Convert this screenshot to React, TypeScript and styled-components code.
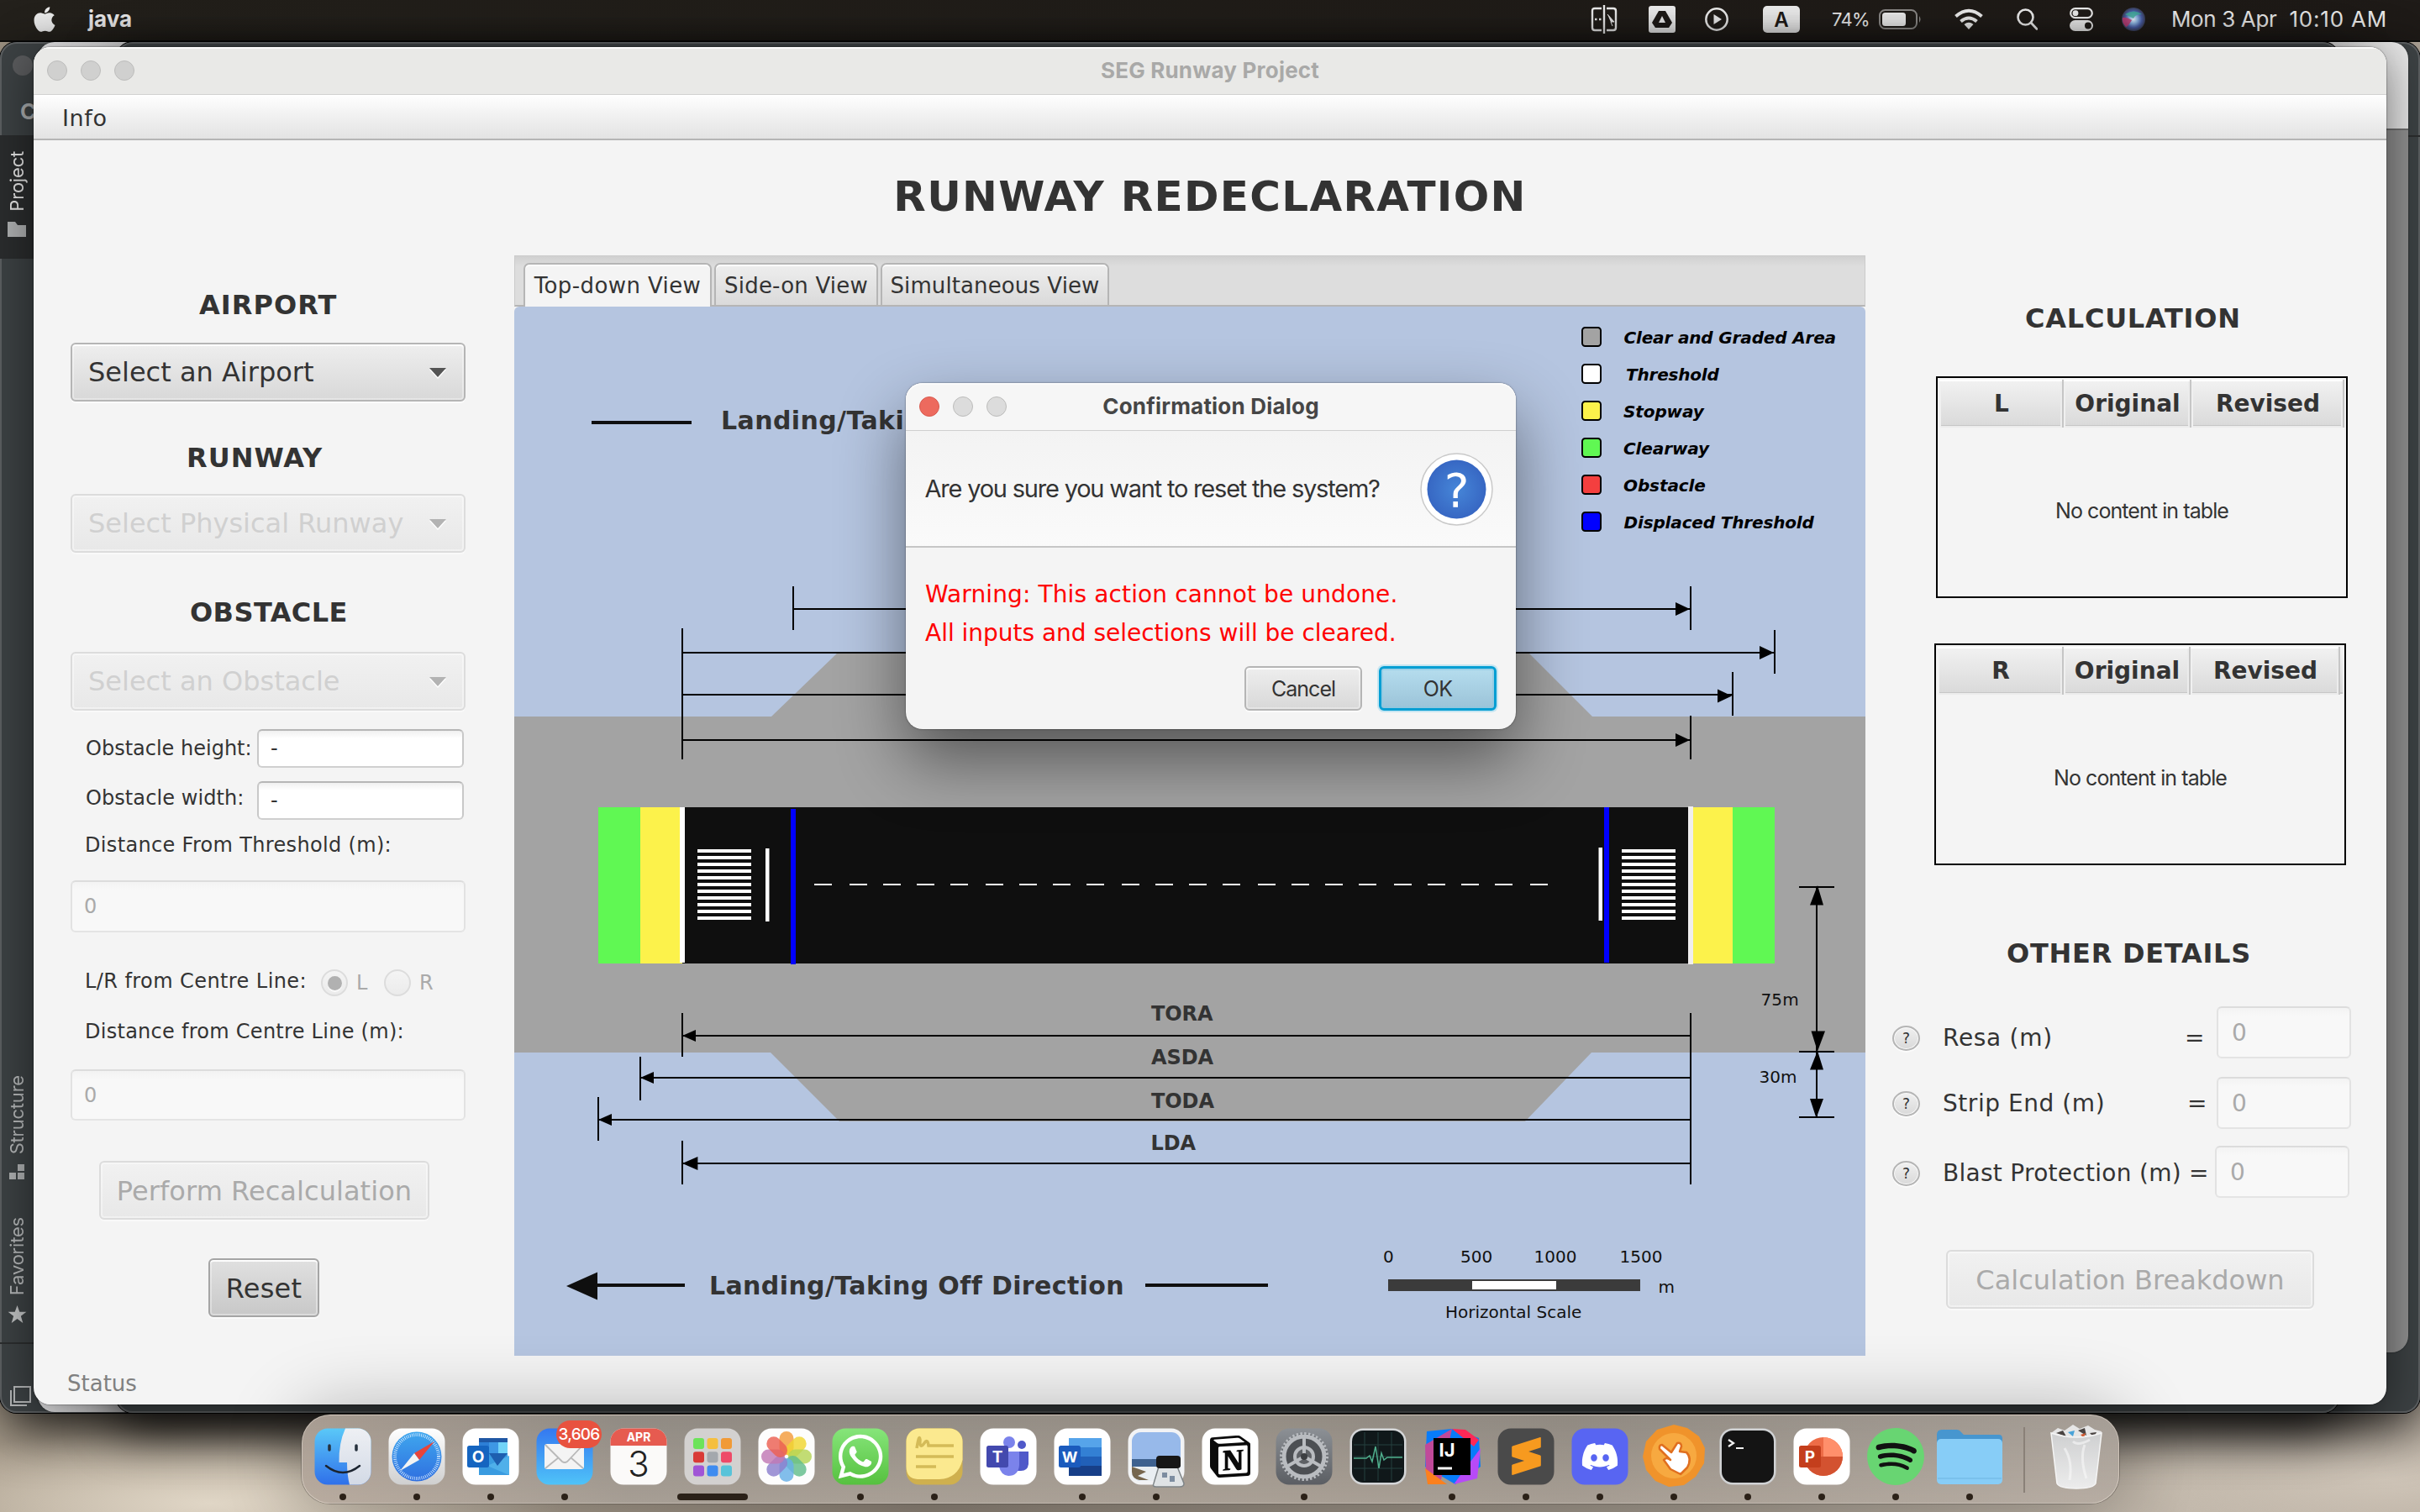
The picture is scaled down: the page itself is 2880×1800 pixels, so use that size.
import React from "react";
import styled, { createGlobalStyle, css } from "styled-components";
import { FaApple, FaWhatsapp, FaDiscord, FaSpotify } from "react-icons/fa";
import { SiNotion, SiSublimetext } from "react-icons/si";

const uiFont = '"DejaVu Sans", Verdana, sans-serif';
const sysFont = 'Inter, "Liberation Sans", sans-serif';
const ink = "#333333";

const GlobalStyle = createGlobalStyle`
  * { box-sizing: border-box; }
  html, body { margin: 0; padding: 0; }
  body { width: 2880px; height: 1800px; overflow: hidden; font-family: ${uiFont}; color: ${ink}; white-space: pre; }
  svg { display: block; }
`;

/* ---------- desktop and background windows ---------- */

const Desktop = styled.div`
  position: relative;
  width: 2880px;
  height: 1800px;
  overflow: hidden;
  background:
    radial-gradient(ellipse 420px 90px at 250px 1790px, #e0d6c6 0%, rgba(224, 214, 198, 0) 100%),
    radial-gradient(ellipse 300px 80px at 2840px 1760px, #cfc5b8 0%, rgba(207, 197, 184, 0) 100%),
    linear-gradient(90deg, #a99d8c 0, #b9ad9c 300px, #8d8377 1100px, #a39a8e 2000px, #c2b8ab 2600px, #b9aea1 2880px);
`;

const MenuBar = styled.header`
  display: flex;
  align-items: center;
  height: 50px;
  padding: 0 39px 2px 40px;
  background: linear-gradient(90deg, #24211c, #1f1b18);
  border-bottom: 2px solid #0e0d0c;
  color: #ececec;
  font: 26px/48px ${sysFont};
`;

const AppName = styled.span`
  font-weight: 700;
  margin-left: 39px;
`;

const StatusItems = styled.div`
  display: flex;
  align-items: center;
  margin-left: auto;
`;

const StatusItem = styled.span<{ $before: number; $track?: number; $size?: number }>`
  display: block;
  margin-left: ${(p) => p.$before}px;
  letter-spacing: ${(p) => p.$track ?? 0}px;
  font-size: ${(p) => p.$size ?? 26}px;
`;

const BackWindow = styled.div<{ $x: number; $right: number; $bottom: number; $tone: "dark" | "light" | "split" }>`
  position: absolute;
  left: ${(p) => p.$x}px;
  top: 50px;
  width: ${(p) => p.$right - p.$x}px;
  height: ${(p) => p.$bottom - 50}px;
  border-radius: 20px;
  overflow: hidden;
  background: ${(p) =>
    p.$tone === "dark" ? "#3c4143" : p.$tone === "light" ? "#e4e4e6" : "linear-gradient(#e6e6e6 0 103px, #6e6e6e 103px 105px, #909090 105px)"};
  box-shadow: ${(p) => (p.$tone === "dark" ? "inset 0 0 0 2px #5b5e60, 0 0 0 1px #000, 0 20px 60px rgba(0,0,0,.75)" : "0 0 2px rgba(0,0,0,.5)")};
`;

const IdeHeader = styled.div`
  display: flex;
  flex-direction: column;
  height: 113px;
  border-bottom: 2px solid #2a2c2d;
  padding: 16px 0 0 24px;
  color: #a9abac;
  font: 700 26px/40px ${sysFont};
`;

const IdeDot = styled.i`
  width: 24px;
  height: 24px;
  flex: none;
  margin: 0 0 23px -9px;
  border-radius: 50%;
  background: #5a5b5d;
`;

const IdeRail = styled.div`
  display: flex;
  flex-direction: column;
  width: 40px;
`;

const RailItem = styled.div<{ $before: number; $active?: boolean; $h: number }>`
  display: flex;
  flex-direction: column;
  align-items: center;
  gap: 12px;
  height: ${(p) => p.$h}px;
  margin-top: ${(p) => p.$before}px;
  padding-top: ${(p) => (p.$active ? 17 : 0)}px;
  background: ${(p) => (p.$active ? "#2a2c2d" : "transparent")};
  color: ${(p) => (p.$active ? "#e4e4e4" : "#b4b6b7")};
  span {
    writing-mode: vertical-rl;
    transform: rotate(180deg);
    font: 22px/30px ${sysFont};
    letter-spacing: -0.2px;
  }
`;

const RailFooter = styled.div`
  height: 84px;
  margin-top: 22px;
  padding: 50px 0 0 12px;
  border-top: 2px solid #2b2d2e;
`;

/* ---------- application window ---------- */

const AppWindow = styled.main`
  position: absolute;
  left: 40px;
  top: 56px;
  width: 2800px;
  height: 1616px;
  display: flex;
  flex-direction: column;
  border-radius: 20px;
  overflow: hidden;
  background: #f4f4f4;
`;

const WindowShadow = styled.div`
  position: absolute;
  left: 40px;
  top: 56px;
  width: 2800px;
  height: 1616px;
  border-radius: 20px;
  box-shadow: 0 0 2px rgba(0, 0, 0, 0.7), 0 10px 56px rgba(0, 0, 0, 0.5);
`;

const TitleBar = styled.div<{ $bg: string; $line: string; $color: string }>`
  display: grid;
  grid-template-columns: 200px 1fr 200px;
  align-items: center;
  height: 57px;
  flex: none;
  background: ${(p) => p.$bg};
  border-bottom: 1px solid ${(p) => p.$line};
  box-shadow: inset 0 2px 0 #fbfbfb;
  color: ${(p) => p.$color};
  font: 700 26px/52px ${sysFont};
  letter-spacing: 0.2px;
  text-align: center;
`;

const Lights = styled.div`
  display: flex;
  gap: 16px;
  padding-left: 16px;
`;

const Light = styled.i<{ $close?: boolean; $fill: string }>`
  width: 24px;
  height: 24px;
  border-radius: 50%;
  background: ${(p) => (p.$close ? "#ed6a5e" : p.$fill)};
  border: 1px solid ${(p) => (p.$close ? "#d95a4f" : "#bcbcbb")};
`;

const AppMenu = styled.nav`
  height: 54px;
  flex: none;
  padding-left: 34px;
  font-size: 27px;
  line-height: 55px;
  letter-spacing: 0.6px;
  background: linear-gradient(#ffffff, #f0f0f0 50%, #e3e3e3);
  border-bottom: 2px solid #b5b5b5;
`;

const PageTitle = styled.h1`
  margin: 0;
  height: 137px;
  flex: none;
  text-align: center;
  font-size: 50px;
  line-height: 135px;
  letter-spacing: 1.3px;
`;

const Columns = styled.div`
  display: grid;
  grid-template-columns: 572px 1608px 620px;
  flex: 1;
`;

const Column = styled.section`
  display: flex;
  flex-direction: column;
  align-items: flex-start;
`;

const Heading = styled.h2<{ $before: number; $indent: number; $track: number }>`
  margin: ${(p) => p.$before}px 0 0 ${(p) => p.$indent}px;
  font-size: 32px;
  line-height: 40px;
  letter-spacing: ${(p) => p.$track}px;
`;

const disabledSurface = css`
  border-color: #dcdcdc;
  background: linear-gradient(#f1f1f1, #e8e8e8);
  box-shadow: inset 0 0 0 2px rgba(255, 255, 255, 0.4), 0 2px 0 #f9f9f9;
`;

const surface = css`
  border: 2px solid #b5b5b5;
  border-radius: 6px;
  background: linear-gradient(#eeeeee, #d8d8d8);
  box-shadow: inset 0 2px 0 #fdfdfd, inset 0 0 0 2px rgba(255, 255, 255, 0.35), 0 2px 0 #fbfbfb;
`;

const Combo = styled.div<{ $before: number; $off?: boolean }>`
  ${surface}
  display: flex;
  align-items: center;
  justify-content: space-between;
  width: 470px;
  height: 70px;
  margin: ${(p) => p.$before}px 0 0 44px;
  padding: 0 21.5px 0 19px;
  font-size: 32px;
  ${(p) => p.$off && disabledSurface}
  color: ${(p) => (p.$off ? "#d0d0d0" : ink)};
`;

const Caret = styled.i<{ $off?: boolean }>`
  border: 10.5px solid transparent;
  border-top: 11px solid ${(p) => (p.$off ? "#b3b3b3" : "#545454")};
  border-bottom: 0;
  filter: drop-shadow(0 2px 0 #fff);
`;

const FormRow = styled.div<{ $before: number; $h: number; $indent: number }>`
  display: flex;
  align-items: center;
  height: ${(p) => p.$h}px;
  margin: ${(p) => p.$before}px 0 0 ${(p) => p.$indent}px;
`;

const FieldLabel = styled.label<{ $w?: number; $track: number; $lift?: number }>`
  width: ${(p) => (p.$w ? p.$w + "px" : "auto")};
  margin-bottom: ${(p) => p.$lift ?? 0}px;
  font-size: 24px;
  line-height: 30px;
  letter-spacing: ${(p) => p.$track}px;
`;

const Field = styled.div<{ $w: number; $h: number; $off?: boolean; $pad: number; $size?: number }>`
  width: ${(p) => p.$w}px;
  height: ${(p) => p.$h}px;
  padding-left: ${(p) => p.$pad}px;
  border: 2px solid;
  border-radius: 6px;
  border-color: ${(p) => (p.$off ? "#dcdcdc #e2e2e2 #e4e4e4" : "#b6b6b6 #c8c8c8 #cfcfcf")};
  background: ${(p) => (p.$off ? "linear-gradient(#f3f3f3, #f8f8f8 10px)" : "linear-gradient(#f0f0f0, #ffffff 9px)")};
  color: ${(p) => (p.$off ? "#aaaaaa" : ink)};
  font-size: ${(p) => p.$size ?? 24}px;
  line-height: ${(p) => p.$h - 3}px;
`;

const FieldSlot = styled.div<{ $before: number }>`
  margin: ${(p) => p.$before}px 0 0 44px;
`;

const Radio = styled.i`
  display: grid;
  place-items: center;
  width: 32px;
  height: 32px;
  border: 2px solid #dcdcdc;
  border-radius: 50%;
  background: linear-gradient(#f4f4f4, #ebebeb);
`;

const RadioDot = styled.i`
  width: 17px;
  height: 17px;
  border-radius: 50%;
  background: #b1b1b1;
  box-shadow: 0 2px 0 #fafafa;
`;

const RadioText = styled.span<{ $w: number }>`
  width: ${(p) => p.$w}px;
  padding-left: 10px;
  color: #aaaaaa;
  font-size: 24px;
`;

const Button = styled.div<{ $before?: number; $indent?: number; $w: number; $h: number; $kind?: "off" | "pressed" | "default"; $track?: number }>`
  ${surface}
  display: grid;
  place-items: center;
  width: ${(p) => p.$w}px;
  height: ${(p) => p.$h}px;
  margin: ${(p) => p.$before ?? 0}px 0 0 ${(p) => p.$indent ?? 0}px;
  font-size: 32px;
  line-height: 40px;
  padding-top: 2px;
  letter-spacing: ${(p) => p.$track ?? 0}px;
  ${(p) => p.$kind === "off" && css`${disabledSurface} color: #aaaaaa;`}
  ${(p) => p.$kind === "pressed" && css`
    border-color: #a5a5a5;
    background: linear-gradient(#e0e0e0, #c8c8c8);
  `}
  ${(p) => p.$kind === "default" && css`
    border: 3px solid #039ed3;
    background: linear-gradient(#b5ddee, #9bc3d8);
    box-shadow: inset 0 0 0 2px rgba(140, 200, 225, 0.6), 0 0 0 2px #c5e5f1;
  `}
`;

const StatusText = styled.div`
  margin: 64px 0 0 40px;
  color: #808080;
  font-size: 26px;
  line-height: 30px;
`;

/* ---------- tabs and runway diagram ---------- */

const TabStrip = styled.div`
  display: flex;
  align-items: flex-end;
  height: 61px;
  flex: none;
  padding-left: 10px;
  background: linear-gradient(#d0d0d0, #dddddd 12px);
  border: 1px solid #cbcbcb;
  border-bottom: 2px solid #b5b5b5;
  width: 1608px;
`;

const Tab = styled.div<{ $w: number; $after?: number; $on?: boolean; $track: number }>`
  width: ${(p) => p.$w}px;
  height: ${(p) => (p.$on ? 52 : 50)}px;
  margin: 0 ${(p) => p.$after ?? 0}px ${(p) => (p.$on ? -2 : 0)}px 0;
  border: 2px solid #b5b5b5;
  border-bottom: 0;
  border-radius: 7px 7px 0 0;
  background: ${(p) => (p.$on ? "#f4f4f4" : "linear-gradient(#eeeeee, #dadada)")};
  box-shadow: inset 0 2px 0 #fdfdfd;
  text-align: center;
  font-size: 26px;
  line-height: 51px;
  letter-spacing: ${(p) => p.$track}px;
`;

const Diagram = styled.svg`
  width: 1608px;
  height: 1249px;
  flex: none;
  border-radius: 6px 6px 0 0;
  background: #b5c5e0;
`;

const DiagramText = styled.text<{ $size: number; $bold?: boolean; $italic?: boolean; $track?: number; $color?: string }>`
  font-family: ${uiFont};
  font-size: ${(p) => p.$size}px;
  font-weight: ${(p) => (p.$bold ? 700 : 400)};
  font-style: ${(p) => (p.$italic ? "italic" : "normal")};
  letter-spacing: ${(p) => p.$track ?? 0}px;
  fill: ${(p) => p.$color ?? "#111111"};
`;

const legend: [string, string, number, number][] = [
  ["Clear and Graded Area", "#a3a3a3", 1932.5, -0.16],
  ["Threshold", "#ffffff", 1935, -0.2],
  ["Stopway", "#fcf24b", 1932, -0.1],
  ["Clearway", "#60f853", 1932, -0.1],
  ["Obstacle", "#f43f3f", 1932, -0.1],
  ["Displaced Threshold", "#0000ff", 1932.5, -0.15],
];

const dashes = [969, 1011, 1051, 1091, 1131, 1173, 1213, 1253, 1293, 1335, 1375, 1415, 1455, 1497, 1537, 1577, 1617, 1659, 1699, 1739, 1779, 1821];
const stripes = Array.from({ length: 11 }, (_, i) => 1011 + i * 8);
const upper = [
  { from: 944, to: 2012, y: 725, top: 698, head: 725 },
  { from: 812, to: 2112, y: 777, top: 750, head: 777 },
  { from: 812, to: 2062, y: 827, top: 800, head: 828.5 },
  { from: 812, to: 2012, y: 881, top: 852, head: 881 },
];
const lower = [
  { name: "TORA", x: 1370, base: 1215, tick: 812, y: 1233, top: 1206, s: 1 },
  { name: "ASDA", x: 1370, base: 1267, tick: 762, y: 1283, top: 1258, s: 1 },
  { name: "TODA", x: 1370, base: 1319, tick: 712, y: 1333, top: 1306, s: 1 },
  { name: "LDA", x: 1369.5, base: 1369, tick: 812, y: 1385, top: 1358, s: 1.15 },
];

const RunwayDiagram = () => (
  <Diagram viewBox="612 365 1608 1249">
    <path d="M612 853H918L998 776H1818L1895 853H2220V1253H1894L1815 1335H999L917 1253H612Z" fill="#a3a3a3" />
    <path d="M704 503H823" stroke="#0f0f0f" strokeWidth="4" />
    <DiagramText x="858" y="511" $size={30} $bold $track={0.4} $color={ink}>Landing/Taking Off Direction</DiagramText>
    {legend.map(([name, fill, x, track], i) => (
      <g key={name}>
        <rect x="1883" y={390 + i * 44} width="22" height="22" rx="3.5" fill={fill} stroke="#000" strokeWidth="2" />
        <DiagramText x={x} y={409 + i * 44} $size={20} $bold $italic $track={track} $color="#000">{name}</DiagramText>
      </g>
    ))}
    <g stroke="#000" strokeWidth="2">
      <path d="M944 698V750M812 748V904" />
      {upper.map((a) => (
        <g key={a.y}>
          <path d={`M${a.from} ${a.y}H${a.to}M${a.to} ${a.top}v52`} />
          <path d={`M${a.to - 18} ${a.head - 8}l17 8l-17 8z`} stroke="none" />
        </g>
      ))}
      <path d="M2012 1206V1410" />
      {lower.map((a) => (
        <g key={a.y}>
          <path d={`M${a.tick} ${a.y}H2012M${a.tick} ${a.top}v52`} />
          <path d={`M${a.tick} ${a.y}l${16 * a.s} ${-7 * a.s}v${14 * a.s}z`} stroke="none" />
        </g>
      ))}
    </g>
    {lower.map((a) => (
      <DiagramText key={a.name} x={a.x} y={a.base} $size={24} $bold $track={-0.1} $color={ink}>{a.name}</DiagramText>
    ))}
    <rect x="712" y="961" width="1400" height="186" fill="#0f0f0f" />
    <rect x="712" y="961" width="50" height="186" fill="#60f853" />
    <rect x="762" y="961" width="50" height="186" fill="#fcf24b" />
    <rect x="809" y="961" width="6" height="185" fill="#fff" />
    <rect x="2015" y="961" width="47" height="186" fill="#fcf24b" />
    <rect x="2062" y="961" width="50" height="186" fill="#60f853" />
    <rect x="2009" y="960" width="6" height="188" fill="#f0eeee" />
    <rect x="941" y="963" width="6" height="185" fill="#00f" />
    <rect x="1909" y="961" width="6" height="185" fill="#00f" />
    <g fill="#fff">
      {stripes.map((y) => (
        <path key={y} d={`M830 ${y}h64v4h-64zM1930 ${y}h64v4h-64z`} />
      ))}
      <rect x="911" y="1010" width="4.5" height="87" />
      <rect x="1902.5" y="1009" width="4.5" height="87" />
      {dashes.map((x) => (
        <rect key={x} x={x} y="1052" width="21" height="2" />
      ))}
    </g>
    <g stroke="#000" strokeWidth="2">
      <path d="M2141 1056H2183M2141 1252H2183M2141 1330H2183M2162 1056V1330" />
      <path d="M2163 1054l7 23.5h-16zM2155.500 1227.500h16.500l-9 24zM2163 1251l7 22.500h-16zM2154 1308h16l-8.500 23z" stroke="none" />
    </g>
    <DiagramText x="2095.5" y="1197" $size={20} $track={0.1}>75m</DiagramText>
    <DiagramText x="2093.5" y="1289" $size={20}>30m</DiagramText>
    <path d="M674 1531L711 1514.500V1547.500ZM711 1528H815V1532H711ZM1363 1528H1509V1532H1363Z" fill="#0f0f0f" />
    <DiagramText x="844" y="1541" $size={30} $bold $track={0.38} $color={ink}>Landing/Taking Off Direction</DiagramText>
    <DiagramText x="1646" y="1503" $size={20}>0</DiagramText>
    <DiagramText x="1738" y="1503" $size={20}>500</DiagramText>
    <DiagramText x="1825.5" y="1503" $size={20}>1000</DiagramText>
    <DiagramText x="1927.5" y="1503" $size={20}>1500</DiagramText>
    <rect x="1652" y="1523" width="300" height="14" fill="#3b3b3b" />
    <rect x="1752" y="1525" width="100" height="10" fill="#fff" />
    <DiagramText x="1973.5" y="1539" $size={20}>m</DiagramText>
    <DiagramText x="1720" y="1569" $size={20}>Horizontal Scale</DiagramText>
  </Diagram>
);

/* ---------- result tables and details ---------- */

const Table = styled.div<{ $before: number; $indent: number }>`
  display: flex;
  flex-direction: column;
  width: 490px;
  height: 264px;
  margin: ${(p) => p.$before}px 0 0 ${(p) => p.$indent}px;
  padding: 2px;
  border: 2px solid #000;
`;

const HeaderRow = styled.div<{ $cols: string }>`
  display: grid;
  grid-template-columns: ${(p) => p.$cols};
  height: 56px;
  flex: none;
  border-bottom: 2px solid #c6c6c6;
  background: linear-gradient(#f2f2f2, #dadada);
`;

const HeaderCell = styled.div`
  padding-left: 2px;
  border-right: 2px solid #c6c6c6;
  box-shadow: inset 0 2px 0 #fff, inset 2px 0 0 #f0f0f0, inset -2px -2px 0 #ececec;
  text-align: center;
  font-size: 28px;
  font-weight: 700;
  line-height: 57px;
`;

const EmptyTable = styled.div`
  display: grid;
  place-items: center;
  flex: 1;
  font: 25px/30px ${sysFont};
  letter-spacing: -0.92px;
`;

const ResultTable = ({ side, cols, before, indent }: { side: string; cols: string; before: number; indent: number }) => (
  <Table $before={before} $indent={indent}>
    <HeaderRow $cols={cols}>
      <HeaderCell>{side}</HeaderCell>
      <HeaderCell>Original</HeaderCell>
      <HeaderCell>Revised</HeaderCell>
    </HeaderRow>
    <EmptyTable>No content in table</EmptyTable>
  </Table>
);

const DetailCaption = styled.div<{ $drop: number; $w: number }>`
  display: flex;
  align-items: center;
  width: ${(p) => p.$w}px;
  padding-top: ${(p) => p.$drop}px;
  font-size: 28px;
  line-height: 34px;
`;

const HelpBadge = styled.i`
  width: 33px;
  height: 30px;
  margin-right: 27px;
  border: 2px solid #b5b5b5;
  border-radius: 50%;
  background: linear-gradient(#f0f0f0, #d9d9d9);
  box-shadow: inset 0 0 0 1px #fafafa, 0 2px 0 #fbfbfb;
  font: normal 17px/27px ${uiFont};
  text-align: center;
`;

const DetailName = styled.span<{ $w: number; $track: number }>`
  width: ${(p) => p.$w}px;
  letter-spacing: ${(p) => p.$track}px;
`;

const details = [
  { name: "Resa (m)", before: 43, drop: 13, w: 288, track: 0.7, cap: 386 },
  { name: "Strip End (m)", before: 22, drop: 2, w: 291, track: 0.55, cap: 386 },
  { name: "Blast Protection (m)", before: 20, drop: 4, w: 293, track: 0.28, cap: 384 },
];

/* ---------- confirmation dialog ---------- */

const Dialog = styled.div`
  position: absolute;
  left: 1078px;
  top: 456px;
  width: 726px;
  height: 412px;
  border-radius: 20px;
  background: #f4f4f4;
  box-shadow: 0 0 2px rgba(0, 0, 0, 0.6), 0 36px 80px rgba(0, 0, 0, 0.48);
  ${TitleBar} { border-radius: 20px 20px 0 0; }
`;

const DialogHeader = styled.div`
  display: flex;
  align-items: center;
  justify-content: space-between;
  height: 139px;
  padding: 1px 27.5px 0 22.5px;
  background: linear-gradient(#f3f3f3, #fafafa);
  border-bottom: 2px solid #c6c6c6;
  font: 29px/36px ${sysFont};
  letter-spacing: -1.21px;
`;

const DialogBody = styled.div`
  padding: 33px 23px 0 23px;
  color: #ff0000;
  font-size: 28px;
  line-height: 46px;
`;

const WarningLine = styled.div<{ $track: number }>`
  letter-spacing: ${(p) => p.$track}px;
`;

const DialogButtons = styled.div`
  display: flex;
  justify-content: flex-end;
  gap: 20px;
  margin-top: 16px;
  color: ${ink};
  ${Button} { font: 25px/30px ${sysFont}; padding-top: 0; }
`;

/* ---------- dock ---------- */

const Dock = styled.footer`
  position: absolute;
  left: 359px;
  top: 1684px;
  width: 2163px;
  height: 106px;
  display: flex;
  align-items: flex-start;
  padding: 15px 0 0 4px;
  border-radius: 34px;
  border: 1px solid rgba(225, 215, 205, 0.6);
  background: linear-gradient(rgba(145, 138, 130, 0.35), rgba(190, 178, 166, 0.5)), linear-gradient(90deg, #b3a599, #8f8a83 18%, #979087 45%, #8f8981 70%, #b0a8a0);
  box-shadow: 0 0 0 1px rgba(60, 55, 50, 0.35), 0 0 90px rgba(0, 0, 0, 0.32);
`;

const DockSlot = styled.div`
  display: flex;
  flex-direction: column;
  align-items: center;
  gap: 10px;
  width: 88px;
  svg { overflow: visible; }
`;

const RunningDot = styled.i<{ $wide?: boolean }>`
  width: ${(p) => (p.$wide ? 84 : 8)}px;
  height: 8px;
  border-radius: 4px;
  background: #2b2118;
`;

const DockDivider = styled.i`
  width: 2px;
  height: 78px;
  margin: -1px 17px 0 20px;
  background: #8a8178;
`;

const IconText = styled.text<{ $size: number; $weight?: number }>`
  font-family: ${sysFont};
  font-size: ${(p) => p.$size}px;
  font-weight: ${(p) => p.$weight ?? 700};
  text-anchor: middle;
`;

const Tile = ({ fill }: { fill: string }) => <rect x="0.500" y="0.500" width="67" height="67" rx="15.500" fill={fill} />;

const Finder = () => (
  <>
    <Tile fill="url(#finderBlue)" />
    <path d="M37 .5H52A15.500 15.500 0 0 1 67.500 16V52A15.500 15.500 0 0 1 52 67.500H42Q39 56 39 41H29.500Q29 18 37 .5Z" fill="url(#finderWhite)" />
    <path d="M14 45Q34 61 54 45" fill="none" stroke="#1b2430" strokeWidth="2.500" strokeLinecap="round" />
    <path d="M18 21V26M50 21V26" stroke="#26313d" strokeWidth="3.500" strokeLinecap="round" />
  </>
);

const Safari = () => (
  <>
    <Tile fill="url(#silver)" />
    <circle cx="34" cy="34" r="29.500" fill="url(#safariBlue)" />
    <circle cx="34" cy="34" r="26" fill="none" stroke="#d8ecff" strokeWidth="4" strokeDasharray="0.800 1.470" />
    <path d="M55 16L31 30L37 38Z" fill="#e8443a" />
    <path d="M14 51L31 30L37 38Z" fill="#f3f3f3" />
  </>
);

const Outlook = () => (
  <>
    <Tile fill="#fff" />
    <path d="M20 12H54V20H20Z" fill="#1f57a4" />
    <path d="M20 17H32V34H20Z" fill="#2d7fd6" /><path d="M32 17H43V30H32Z" fill="#3e97e4" /><path d="M43 17H54V30H43Z" fill="#72d4f8" />
    <path d="M20 30H54L56 56H20Z" fill="#3a9be0" /><path d="M56 33V56L30 45Z" fill="#4fb0ea" /><path d="M32 30H54L42 45Z" fill="#1e5fb0" />
    <rect x="6" y="21" width="26" height="26" rx="2.500" fill="#1565c0" />
    <IconText x="19" y="41" $size={19} fill="#fff">O</IconText>
  </>
);

const Mail = () => (
  <>
    <Tile fill="url(#mailBlue)" />
    <rect x="10" y="19" width="47" height="30" rx="3" fill="#f4f4f4" />
    <path d="M11 20L31 40Q34 42 37 40L56 20M11 48L27 35M56 48L41 35" fill="none" stroke="#b9b9b9" strokeWidth="1.800" />
    <rect x="24" y="-9" width="54" height="33" rx="16.500" fill="#e8523f" />
    <IconText x="51" y="14" $size={19} $weight={500} fill="#fff" letterSpacing="-0.8">3,606</IconText>
  </>
);

const Calendar = () => (
  <>
    <Tile fill="#fbfaf9" />
    <path d="M.5 21V16A15.500 15.500 0 0 1 16 .5H52A15.500 15.500 0 0 1 67.500 16V21Z" fill="#e65b50" />
    <IconText x="34" y="16" $size={14} fill="#fff">APR</IconText>
    <IconText x="34" y="57.500" $size={42} $weight={300} fill="#222">3</IconText>
  </>
);

const launchColors = ["#6ce35a", "#f5bf3f", "#f19a36", "#d93a36", "#a4a8ad", "#ee4a68", "#a055d6", "#3f8cf0", "#58c3d9"];
const Launchpad = () => (
  <>
    <Tile fill="#d3d1d0" />
    {launchColors.map((c, i) => (
      <rect key={c} x={11 + (i % 3) * 16.500} y={12 + Math.floor(i / 3) * 16.300} width="13" height="13" rx="3" fill={c} />
    ))}
  </>
);

const petals = ["#f39b3b", "#f0d531", "#b4d456", "#62bd8b", "#66b0e6", "#8b7fcd", "#c179b4", "#ec5f52"];
const Photos = () => (
  <>
    <Tile fill="#fdfdfd" />
    {petals.map((c, i) => (
      <rect key={c} x="25.500" y="4" width="17" height="28" rx="8.500" fill={c} opacity="0.82" transform={`rotate(${i * 45} 34 34)`} />
    ))}
  </>
);

const Notes = () => (
  <>
    <Tile fill="#cfb04e" />
    <path d="M.5 16A15.500 15.500 0 0 1 16 .5H52A15.500 15.500 0 0 1 67.500 16V38Q62 60 40 61H14Q.5 60 .5 46Z" fill="#fbe98f" />
    <path d="M13 24Q16 6 17 14Q16 26 22 18Q26 12 27 21H57M12 34H57M12 46H36" fill="none" stroke="#d4bb58" strokeWidth="3.500" />
  </>
);

const Teams = () => (
  <>
    <Tile fill="#fff" />
    <circle cx="35" cy="17" r="7" fill="#7b83eb" /><circle cx="50" cy="20" r="5" fill="#5059c9" />
    <path d="M40 28H58V43Q57 51 49 51H40Z" fill="#5059c9" /><path d="M23 28H47V44Q46 57 34 57Q25 56 23 46Z" fill="#7b83eb" />
    <rect x="8" y="21" width="26" height="26" rx="2.500" fill="#4349ae" />
    <IconText x="21" y="41" $size={19} fill="#fff">T</IconText>
  </>
);

const Word = () => (
  <>
    <Tile fill="#fff" />
    <path d="M18 12H57V24H18Z" fill="#56a4ea" /><path d="M18 23H57V34H18Z" fill="#3380d4" /><path d="M18 34H57V45H18Z" fill="#2160b8" /><path d="M18 45H57V57H18Z" fill="#173f88" />
    <rect x="6" y="21" width="26" height="26" rx="2.500" fill="#1b5bbd" />
    <IconText x="19" y="41" $size={18} fill="#fff">W</IconText>
  </>
);

const Preview = () => (
  <>
    <Tile fill="#f2f3f5" />
    <rect x="5" y="5" width="58" height="58" rx="11" fill="#97b9ea" />
    <path d="M5 37H63V48H5Z" fill="#3e618f" /><path d="M5 46H63V52Q63 63 52 63H16Q5 63 5 52Z" fill="#e9eef2" />
    <path d="M5 46L22 52L12 57L25 62H14Q5 60 5 52Z" fill="#76664e" />
    <path d="M37 46H59L67 66Q67 70 62 70H34Q29 70 31 66Z" fill="#dfe3e5" stroke="#7f8588" strokeWidth="1.500" />
    <rect x="34" y="33" width="29" height="15" rx="4" fill="#161616" />
    <path d="M41 53h6v6h-6zM50 57h6v7h-6z" fill="#7d8da0" />
  </>
);

const Notion = () => (<><Tile fill="#fff" /><SiNotion x="9" y="9" size={50} color="#0b0b0b" /></>);

const Settings = () => (
  <>
    <Tile fill="url(#slate)" />
    <circle cx="34" cy="34" r="27" fill="#4c4f53" />
    <circle cx="34" cy="34" r="24" fill="none" stroke="#b9bcc0" strokeWidth="5" />
    <circle cx="34" cy="34" r="27.500" fill="none" stroke="#b9bcc0" strokeWidth="3" strokeDasharray="2.400 2.400" />
    <circle cx="34" cy="34" r="11" fill="#5e6165" stroke="#b9bcc0" strokeWidth="4" />
    <path d="M34 34V12M34 34L53 45M34 34L15 45" stroke="#b9bcc0" strokeWidth="4" />
    <circle cx="34" cy="34" r="4" fill="#3c3e41" />
  </>
);

const Activity = () => (
  <>
    <Tile fill="#d4d6d8" />
    <rect x="3" y="3" width="62" height="62" rx="13" fill="#10181a" />
    <path d="M5 20H63M5 34H63M5 48H63M18 5V63M34 5V63M50 5V63" stroke="#24403f" strokeWidth="1" />
    <path d="M5 36H20L24 33L27 40L31 22L35 48L38 30L41 38L45 35H63" fill="none" stroke="#4fae8c" strokeWidth="1.500" />
  </>
);

const IntelliJ = () => (
  <>
    <path d="M4 4L34 1L66 12L68 46L38 67L2 46Z" fill="#087cfa" /><path d="M2 20L34 1L20 66L3 54Z" fill="#c0499a" /><path d="M34 1L50 2L66 14L60 22Z" fill="#fe2857" /><path d="M36 67L68 24L64 60Z" fill="#b74af7" />
    <path d="M2 48L28 67H5Z" fill="#fc801d" />
    <rect x="12" y="12" width="44" height="44" fill="#000" />
    <IconText x="28" y="34" $size={22} fill="#fff">IJ</IconText>
    <path d="M17 48H34" stroke="#fff" strokeWidth="3" />
  </>
);

const Sublime = () => (<><Tile fill="#4a4a4a" /><SiSublimetext x="12" y="11" size={45} color="#f79a1f" /></>);
const Discord = () => (<><Tile fill="#5865f2" /><FaDiscord x="11" y="11" size={46} color="#fff" /></>);

const Pointer = () => (
  <>
    <path d="M34 -4L50 0L64 10L71 24L70 42L60 58L46 68L28 70L12 63L1 50L-3 34L1 16L14 2Z" fill="#f0932b" strokeLinejoin="round" />
    <circle cx="34" cy="33" r="27" fill="#f7a940" />
    <path d="M20 20L31 29L38 18Q43 17 43 22L41 28L49 29Q56 36 50 47L42 55L30 49L22 38Q25 34 30 38L17 25Q16 20 20 20Z" fill="#fff" stroke="#e06f1f" strokeWidth="2.500" strokeLinejoin="round" />
  </>
);

const Terminal = () => (
  <>
    <Tile fill="#d0d2d4" />
    <rect x="3" y="3" width="62" height="62" rx="13" fill="#141414" />
    <path d="M11 14L17 18L11 22M20 24H29" fill="none" stroke="#f2f2f2" strokeWidth="2.200" />
  </>
);

const PowerPoint = () => (
  <>
    <Tile fill="#fff" />
    <circle cx="36" cy="34" r="23" fill="#ed6c47" /><path d="M36 11A23 23 0 0 1 59 34H36Z" fill="#ff8f6b" /><path d="M13 34H59A23 23 0 0 1 13 34Z" fill="#d35230" />
    <rect x="7" y="21" width="26" height="26" rx="2.500" fill="#c43e1c" />
    <IconText x="20" y="41" $size={19} fill="#fff">P</IconText>
  </>
);

const WhatsApp = () => (<><Tile fill="url(#waGreen)" /><FaWhatsapp x="4" y="4" size={60} color="#fff" /></>);
const Spotify = () => (<><circle cx="34" cy="34" r="30" fill="#111" /><FaSpotify x="-1" y="-1" size={70} color="#68d572" /></>);

const Folder = () => (
  <>
    <path d="M-5 8Q-5 2 1 2H19Q22 2 24 5L27 8H69Q73 8 73 13V30H-5Z" fill="#4796cf" />
    <rect x="-5" y="13" width="78" height="54" rx="5" fill="#87cdf7" />
    <path d="M-4 60H72" stroke="#76bde9" strokeWidth="1.500" />
  </>
);

const Trash = () => (
  <>
    <path d="M4 6L12 0L20 3L30 -4L38 1L48 -3L56 2L64 4L62 14H6Z" fill="#e6e6e6" />
    <path d="M10 6L18 3L22 10ZM36 3L44 0L46 9ZM50 6L58 5L55 11Z" fill="#4a4442" />
    <path d="M24 5L32 3L30 10Z" fill="#4aa3d8" /><path d="M39 8L45 6L43 12Z" fill="#d05a30" />
    <path d="M4 6Q34 16 64 6L57 66Q54 72 34 72Q14 72 11 66Z" fill="url(#trashFill)" stroke="#f5f5f5" strokeWidth="1.500" />
    <path d="M20 24Q30 40 26 62M44 20Q38 36 46 60M30 16Q36 22 50 14" fill="none" stroke="#f8f8f8" strokeWidth="3" opacity="0.6" />
  </>
);

type DockApp = { name: string; Icon: () => React.JSX.Element; run?: boolean | "wide" };
const dockApps: DockApp[] = [
  { name: "finder", Icon: Finder, run: true },
  { name: "safari", Icon: Safari, run: true },
  { name: "outlook", Icon: Outlook, run: true },
  { name: "mail", Icon: Mail, run: true },
  { name: "calendar", Icon: Calendar },
  { name: "launchpad", Icon: Launchpad, run: "wide" },
  { name: "photos", Icon: Photos },
  { name: "whatsapp", Icon: WhatsApp, run: true },
  { name: "notes", Icon: Notes, run: true },
  { name: "teams", Icon: Teams },
  { name: "word", Icon: Word, run: true },
  { name: "preview", Icon: Preview, run: true },
  { name: "notion", Icon: Notion },
  { name: "settings", Icon: Settings, run: true },
  { name: "activity", Icon: Activity },
  { name: "intellij", Icon: IntelliJ, run: true },
  { name: "sublime", Icon: Sublime, run: true },
  { name: "discord", Icon: Discord, run: true },
  { name: "pointer", Icon: Pointer, run: true },
  { name: "terminal", Icon: Terminal, run: true },
  { name: "powerpoint", Icon: PowerPoint, run: true },
  { name: "spotify", Icon: Spotify, run: true },
  { name: "folder", Icon: Folder, run: true },
];

const Gradient = ({ id, a, b }: { id: string; a: string; b: string }) => (
  <linearGradient id={id} x1="0" y1="0" x2="0" y2="1">
    <stop offset="0" stopColor={a} />
    <stop offset="1" stopColor={b} />
  </linearGradient>
);

const HiddenSvg = styled.svg`
  position: absolute;
  width: 0;
  height: 0;
`;

const SharedDefs = () => (
  <HiddenSvg>
    <defs>
      <Gradient id="finderBlue" a="#5ac8f8" b="#2f70ea" />
      <Gradient id="finderWhite" a="#eef0f4" b="#d3dae6" />
      <Gradient id="silver" a="#ffffff" b="#cfcfcf" />
      <Gradient id="safariBlue" a="#3fa7ee" b="#2f6fe0" />
      <Gradient id="mailBlue" a="#3478f0" b="#4fc3f8" />
      <Gradient id="waGreen" a="#86e57a" b="#56c13f" />
      <Gradient id="slate" a="#8c9095" b="#5b5e63" />
      <Gradient id="trashFill" a="#cfd0d1" b="#ececec" />
      <radialGradient id="question">
        <stop offset="0" stopColor="#4686d8" />
        <stop offset="1" stopColor="#3767c3" />
      </radialGradient>
      <radialGradient id="siri">
        <stop offset="0" stopColor="#eef6ff" />
        <stop offset="0.350" stopColor="#8fb8e6" />
        <stop offset="0.700" stopColor="#4a5fa8" />
        <stop offset="1" stopColor="#3a3f58" />
      </radialGradient>
    </defs>
  </HiddenSvg>
);

const AppleMark = styled(FaApple)`
  margin: 0 -4px;
`;

const SystemBar = () => (
  <MenuBar>
    <AppleMark size={34} />
    <AppName>java</AppName>
    <StatusItems>
      <svg width="32" height="36" viewBox="0 0 32 36" fill="none" stroke="#ececec" strokeWidth="2.400">
        <path d="M13 5H5Q2 5 2 8V28Q2 31 5 31H13M19 5H27Q30 5 30 8V28Q30 31 27 31H19M16 1V35" />
        <path d="M5 18h2.500M10 18h2.500" /><path d="M20 12L28 21L24 21L26 26" fill="#ececec" strokeWidth="1" />
      </svg>
      <StatusItem $before={37}>
        <svg width="32" height="32" viewBox="0 0 32 32">
          <rect width="32" height="32" rx="3" fill="#ececec" />
          <path d="M12 6H20L28 20L24 26H8L4 20Z" fill="#1f1b18" /><path d="M16 12L20 20H12Z" fill="#ececec" />
        </svg>
      </StatusItem>
      <StatusItem $before={34.5}>
        <svg width="28" height="28" viewBox="0 0 28 28">
          <circle cx="14" cy="14" r="12.700" fill="none" stroke="#ececec" strokeWidth="2.500" /><path d="M10.500 8L20 14L10.500 20Z" fill="#ececec" />
        </svg>
      </StatusItem>
      <StatusItem $before={41.5}>
        <svg width="44" height="32" viewBox="0 0 44 32">
          <rect width="44" height="32" rx="5" fill="#ececec" />
          <IconText x="22" y="24.500" $size={24} $weight={600} fill="#1f1b18">A</IconText>
        </svg>
      </StatusItem>
      <StatusItem $before={38} $track={-0.69} $size={22}>74%</StatusItem>
      <StatusItem $before={11}>
        <svg width="51" height="24" viewBox="0 0 51 24">
          <rect x="1" y="1" width="44" height="22" rx="6.500" fill="none" stroke="#8b8987" strokeWidth="2" />
          <rect x="4" y="4" width="28" height="16" rx="3.500" fill="#ececec" /><path d="M48 8Q51 12 48 16Z" fill="#8b8987" />
        </svg>
      </StatusItem>
      <StatusItem $before={39}>
        <svg width="34" height="26" viewBox="0 0 34 26" fill="none" stroke="#ececec" strokeWidth="4">
          <path d="M1.500 9.500Q17 -4 32.500 9.500M7.500 15.500Q17 7.500 26.500 15.500" /><path d="M17 25L11.500 19Q17 14.500 22.500 19Z" fill="#ececec" stroke="none" />
        </svg>
      </StatusItem>
      <StatusItem $before={40}>
        <svg width="25" height="26" viewBox="0 0 25 26" fill="none" stroke="#ececec" strokeWidth="2.600">
          <circle cx="10.500" cy="10.500" r="9" /><path d="M17 17L24 24.500" strokeLinecap="round" />
        </svg>
      </StatusItem>
      <StatusItem $before={38}>
        <svg width="28" height="28" viewBox="0 0 28 28">
          <rect x="1.200" y="1.200" width="25.600" height="11" rx="5.500" fill="none" stroke="#ececec" strokeWidth="2.200" /><circle cx="7" cy="6.700" r="3.400" fill="#ececec" />
          <rect y="15" width="28" height="13" rx="6.500" fill="#ececec" /><circle cx="22" cy="21.500" r="4" fill="#1f1b18" />
        </svg>
      </StatusItem>
      <StatusItem $before={34}>
        <svg width="28" height="28">
          <circle cx="14" cy="14" r="14" fill="url(#siri)" />
          <path d="M4 8Q14 1 24 8Q16 8 14 13Z" fill="#3fae98" opacity=".8" />
          <path d="M1 12Q6 11 12 15Q8 22 5 23Q0 18 1 12Z" fill="#c2396f" opacity=".85" />
        </svg>
      </StatusItem>
      <StatusItem $before={31} $track={-0.37}>Mon 3 Apr</StatusItem>
      <StatusItem $before={15} $track={0.8}>10:10 AM</StatusItem>
    </StatusItems>
  </MenuBar>
);

const IdeWindow = () => (
  <BackWindow $x={0} $right={2880} $bottom={1682} $tone="dark">
    <IdeHeader><IdeDot />C</IdeHeader>
    <IdeRail>
      <RailItem $before={0} $h={145} $active>
        <span>Project</span>
        <svg width="22" height="18"><path d="M0 0H9L12 4H22V18H0Z" fill="#adafb0" /></svg>
      </RailItem>
      <RailItem $before={972} $h={124}>
        <span>Structure</span>
        <svg width="18" height="19"><path d="M0 10H8V19H0ZM10 10H18V19H10ZM10 0H18V8H10Z" fill="#adafb0" /></svg>
      </RailItem>
      <RailItem $before={45} $h={127}>
        <span>Favorites</span>
        <svg width="25" height="25" viewBox="0 0 25 25"><path d="M12.500 0L15.700 9H25L17.500 14.600L20.300 24L12.500 18.300L4.700 24L7.500 14.600L0 9H9.300Z" fill="#c0c2c3" /></svg>
      </RailItem>
      <RailFooter>
        <svg width="26" height="24" fill="none" stroke="#b4b6b7" strokeWidth="2"><path d="M5 1H24V19H5ZM1 5V23H20" /></svg>
      </RailFooter>
    </IdeRail>
  </BackWindow>
);

const AirportForm = () => (
  <Column>
    <Heading $before={39} $indent={197} $track={1.05}>AIRPORT</Heading>
    <Combo $before={25}>Select an Airport<Caret /></Combo>
    <Heading $before={47} $indent={182} $track={1.01}>RUNWAY</Heading>
    <Combo $before={23} $off>Select Physical Runway<Caret $off /></Combo>
    <Heading $before={51} $indent={186} $track={0.42}>OBSTACLE</Heading>
    <Combo $before={27} $off>Select an Obstacle<Caret $off /></Combo>
    <FormRow $before={22} $h={46} $indent={62}>
      <FieldLabel $w={204} $track={0}>Obstacle height:</FieldLabel>
      <Field $w={246} $h={46} $pad={14}>-</Field>
    </FormRow>
    <FormRow $before={16} $h={46} $indent={62}>
      <FieldLabel $w={204} $track={0.08} $lift={6}>Obstacle width:</FieldLabel>
      <Field $w={246} $h={46} $pad={14}>-</Field>
    </FormRow>
    <FormRow $before={15} $h={30} $indent={61}>
      <FieldLabel $track={0.33}>Distance From Threshold (m):</FieldLabel>
    </FormRow>
    <FieldSlot $before={27}><Field $w={470} $h={62} $pad={14} $off>0</Field></FieldSlot>
    <FormRow $before={42} $h={36} $indent={61}>
      <FieldLabel $w={281} $track={0.42} $lift={5}>L/R from Centre Line:</FieldLabel>
      <Radio><RadioDot /></Radio>
      <RadioText $w={43}>L</RadioText>
      <Radio />
      <RadioText $w={40}>R</RadioText>
    </FormRow>
    <FormRow $before={25} $h={30} $indent={61}>
      <FieldLabel $track={0.27}>Distance from Centre Line (m):</FieldLabel>
    </FormRow>
    <FieldSlot $before={30}><Field $w={470} $h={61} $pad={14} $off>0</Field></FieldSlot>
    <Button $before={48} $indent={78} $w={393} $h={70} $kind="off" $track={0.06}>Perform Recalculation</Button>
    <Button $before={46} $indent={208} $w={132} $h={70} $kind="pressed" $track={0.2}>Reset</Button>
    <StatusText>Status</StatusText>
  </Column>
);

const ResultsPanel = () => (
  <Column>
    <Heading $before={55} $indent={190} $track={0.75}>CALCULATION</Heading>
    <ResultTable side="L" before={49} indent={84} cols="148px 152px 182px" />
    <ResultTable side="R" before={54} indent={82} cols="150px 151px 178px" />
    <Heading $before={85} $indent={168} $track={0.74}>OTHER DETAILS</Heading>
    {details.map((d) => (
      <FormRow key={d.name} $before={d.before} $h={62} $indent={32}>
        <DetailCaption $drop={d.drop} $w={d.cap}>
          <HelpBadge>?</HelpBadge>
          <DetailName $w={d.w} $track={d.track}>{d.name}</DetailName>=
        </DetailCaption>
        <Field $w={160} $h={62} $pad={16} $size={28} $off>0</Field>
      </FormRow>
    ))}
    <Button $before={62} $indent={96} $w={438} $h={70} $kind="off">Calculation Breakdown</Button>
  </Column>
);

const WindowLights = ({ closable, fill }: { closable?: boolean; fill: string }) => (
  <Lights>
    <Light $close={closable} $fill={fill} />
    <Light $fill={fill} />
    <Light $fill={fill} />
  </Lights>
);

export default function App() {
  return (
    <Desktop>
      <GlobalStyle />
      <SharedDefs />
      <SystemBar />
      <IdeWindow />
      <BackWindow $x={45} $right={1200} $bottom={1681} $tone="light" />
      <BackWindow $x={1200} $right={2866} $bottom={1610} $tone="split" />
      <BackWindow $x={138} $right={2784} $bottom={1682} $tone="dark" />
      <WindowShadow />
      <AppWindow>
        <TitleBar $bg="#e9e9e7" $line="#d2d2d1" $color="#a9a9a8">
          <WindowLights fill="#d0d0cf" />
          SEG Runway Project
        </TitleBar>
        <AppMenu>Info</AppMenu>
        <PageTitle>RUNWAY REDECLARATION</PageTitle>
        <Columns>
          <AirportForm />
          <Column>
            <TabStrip>
              <Tab $w={224} $after={3} $on $track={0.4}>Top-down View</Tab>
              <Tab $w={195} $after={3} $track={0.21}>Side-on View</Tab>
              <Tab $w={272} $track={0.1}>Simultaneous View</Tab>
            </TabStrip>
            <RunwayDiagram />
          </Column>
          <ResultsPanel />
        </Columns>
      </AppWindow>
      <Dialog>
        <TitleBar $bg="#f6f6f6" $line="#cfcfcf" $color="#464646">
          <WindowLights closable fill="#dcdcdc" />
          Confirmation Dialog
        </TitleBar>
        <DialogHeader>
          Are you sure you want to reset the system?
          <svg width="87" height="87" viewBox="0 0 87 87">
            <circle cx="43.500" cy="43.500" r="42.500" fill="#fff" stroke="#c9c9c9" strokeWidth="1.500" />
            <circle cx="43.500" cy="43.500" r="35" fill="url(#question)" />
            <DiagramText x="43.500" y="64" $size={56} $color="#fff" textAnchor="middle">?</DiagramText>
          </svg>
        </DialogHeader>
        <DialogBody>
          <WarningLine $track={0.12}>Warning: This action cannot be undone.</WarningLine>
          <WarningLine $track={-0.02}>All inputs and selections will be cleared.</WarningLine>
          <DialogButtons>
            <Button $w={140} $h={53} $track={-0.96}>Cancel</Button>
            <Button $w={140} $h={53} $track={-0.8} $kind="default">OK</Button>
          </DialogButtons>
        </DialogBody>
      </Dialog>
      <Dock>
        {dockApps.map(({ name, Icon, run }) => (
          <DockSlot key={name}>
            <svg width="68" height="68"><Icon /></svg>
            {run && <RunningDot $wide={run === "wide"} />}
          </DockSlot>
        ))}
        <DockDivider />
        <DockSlot><svg width="68" height="68"><Trash /></svg></DockSlot>
      </Dock>
    </Desktop>
  );
}
